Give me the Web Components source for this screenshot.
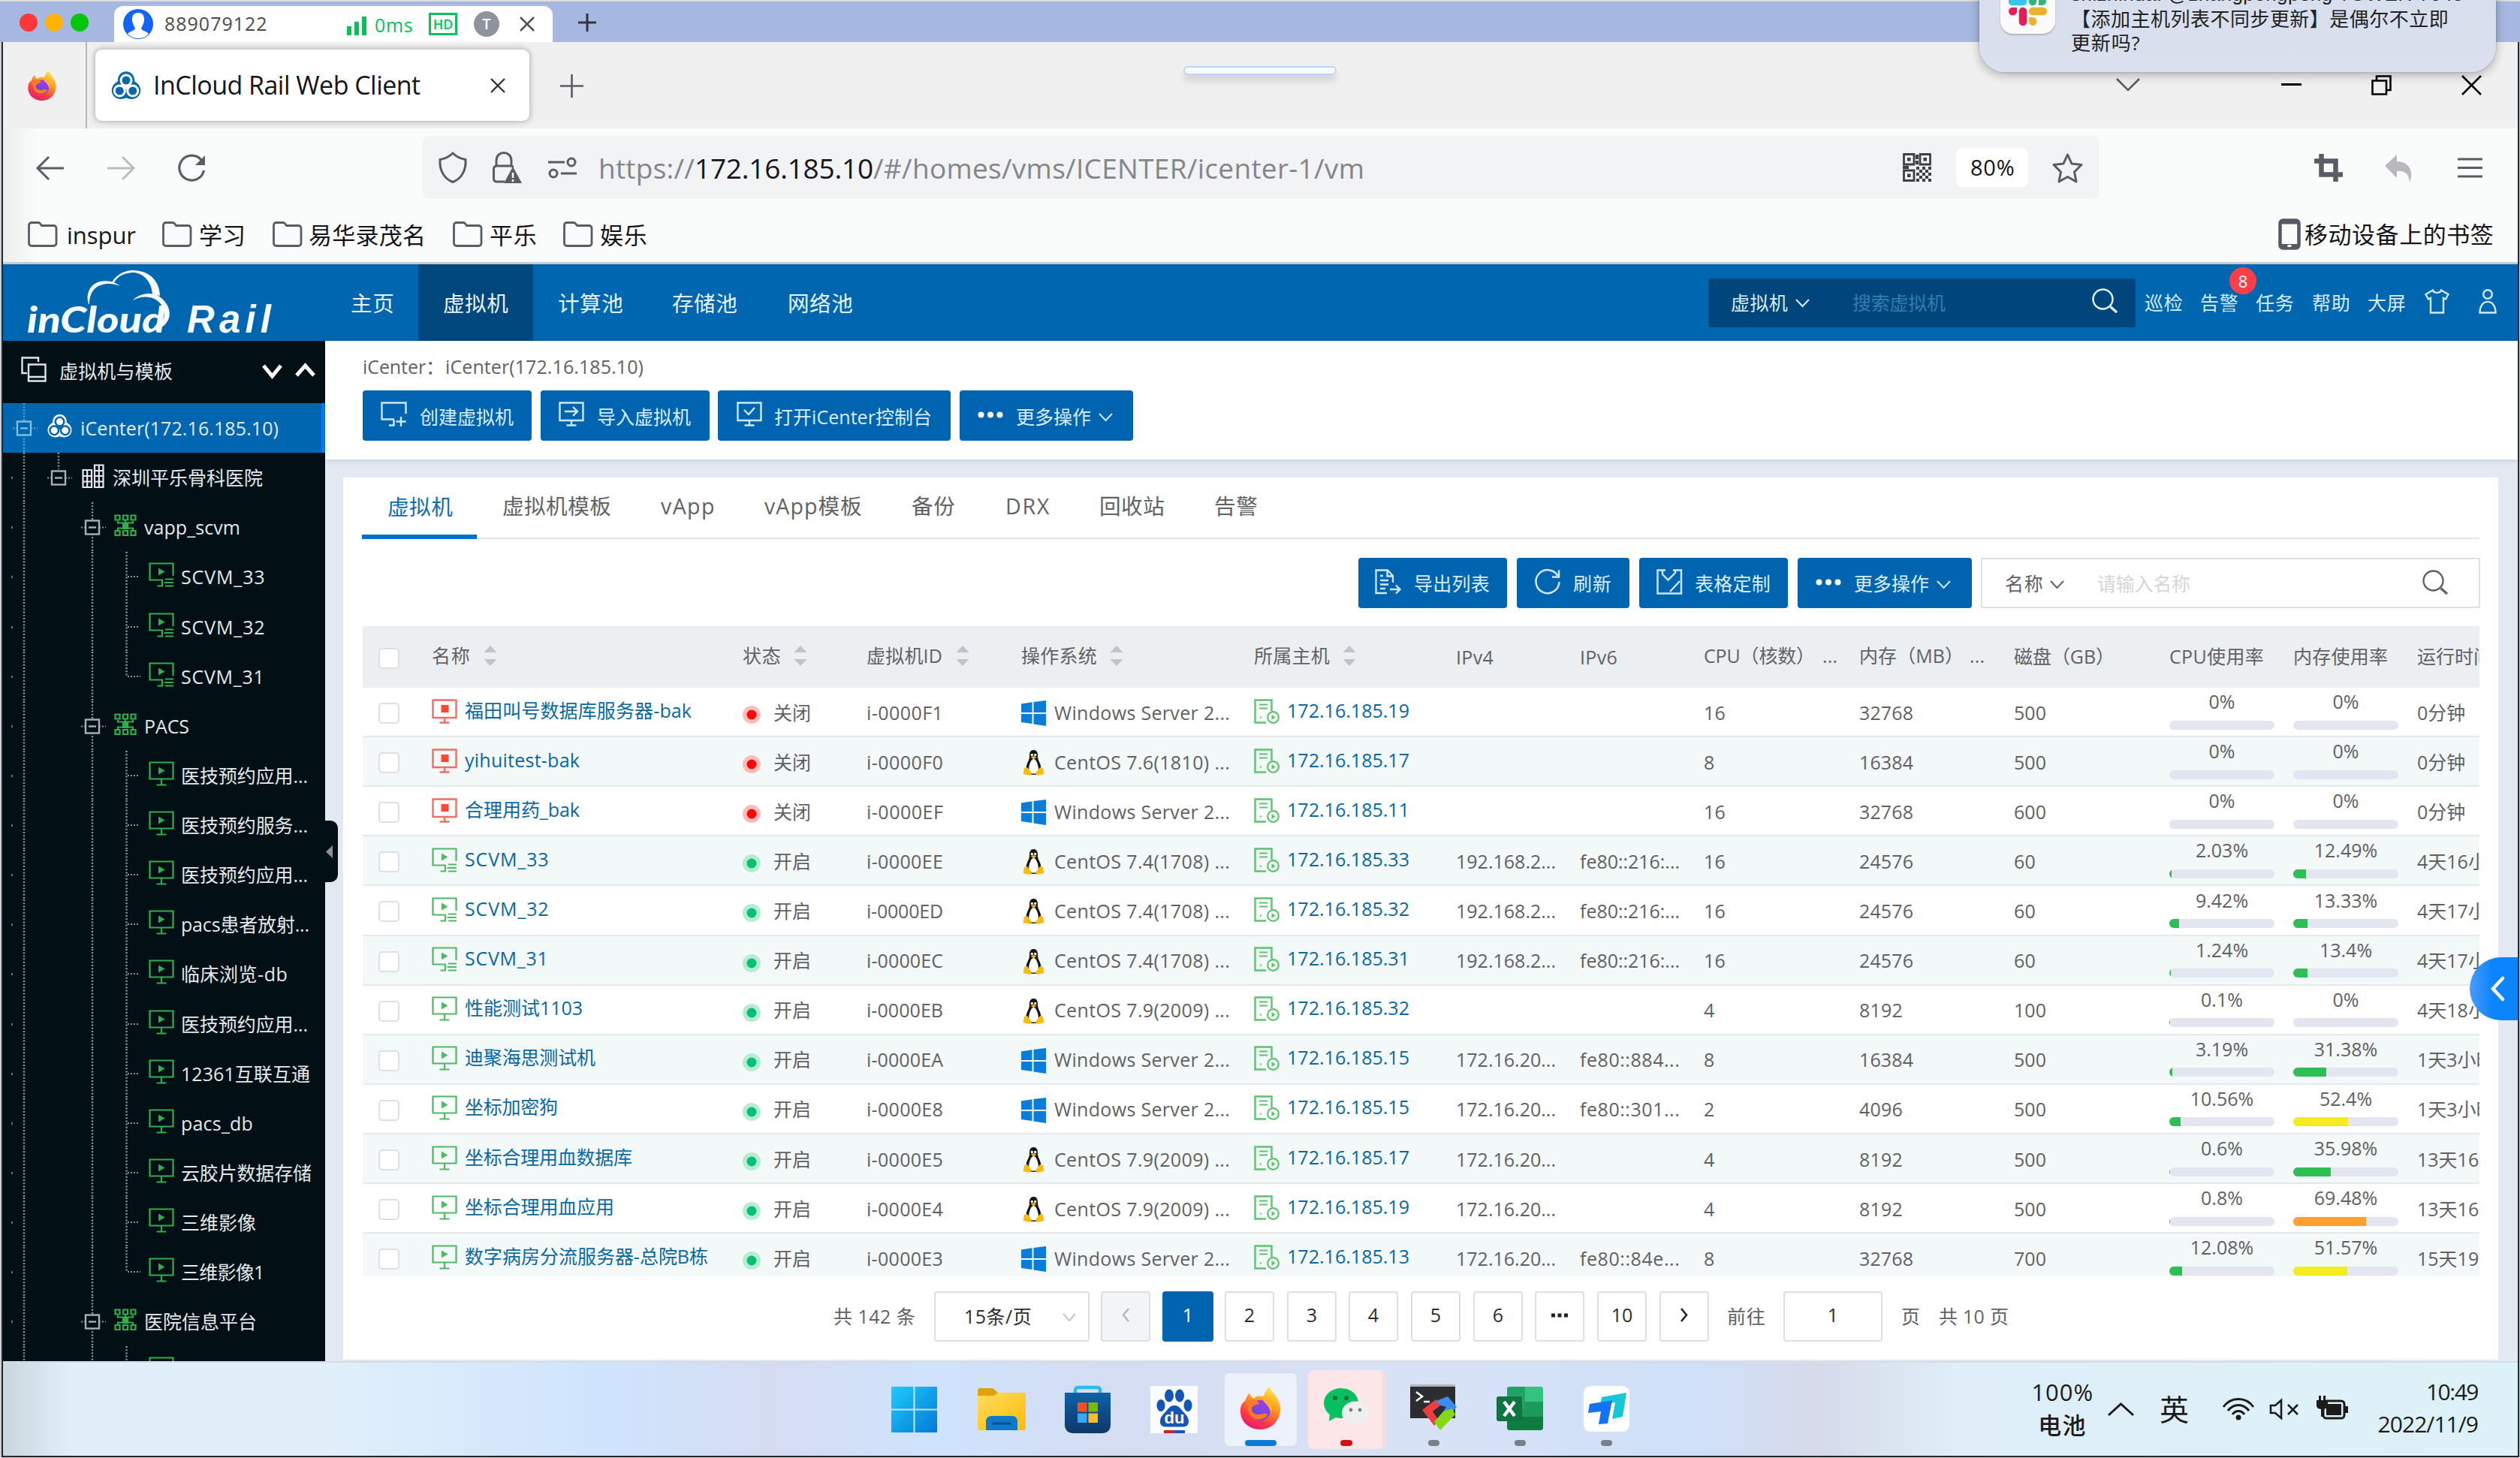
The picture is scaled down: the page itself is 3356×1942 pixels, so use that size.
<!DOCTYPE html>
<html lang="zh-CN">
<head>
<meta charset="utf-8">
<title>InCloud Rail Web Client</title>
<style>
html,body{margin:0;padding:0}
body{width:3356px;height:1942px;overflow:hidden;background:#cfd3d8;font-family:"Open Sans","Noto Sans CJK SC",sans-serif;font-size:25px;line-height:1;color:#606266}
</style>
</head>
<body>
<remote-desktop></remote-desktop>
<script>
/* ---------- helpers: every bar is a flex row, items carry their start and width ---------- */
const COMMON = `*{box-sizing:border-box}:host{display:block}
.row{display:flex;align-items:center;height:100%}
.i{flex:none;display:flex;align-items:center}
.c{justify-content:center}.r{justify-content:flex-end}
svg{display:block;flex:none;overflow:visible}`;
const item = (x, w, html, dy = 0, cls = '', st = '') => ({x, w, html, dy, cls, st});
const row = (x0, items) => {
  let p = x0;
  return '<div class="row">' + items.map(o => {
    const ml = o.x - p; p = o.x + o.w;
    return `<div class="i ${o.cls}" style="width:${o.w}px;margin:${o.dy > 0 ? 2 * o.dy : 0}px 0 ${o.dy < 0 ? -2 * o.dy : 0}px ${ml}px;${o.st}">${o.html}</div>`;
  }).join('') + '</div>';
};
const t = (x, w, text, o = {}) => item(x, w, `<fit-text w="${w}" style="font-size:${o.s || 25}px;${o.c ? 'color:' + o.c + ';' : ''}${o.b ? 'font-weight:' + o.b + ';' : ''}">${text}</fit-text>`, o.dy || 0);
const svg = (w, h, body, vb) => `<svg width="${w}" height="${h}" viewBox="${vb || `0 0 ${w} ${h}`}" fill="none">${body}</svg>`;
const ic = (x, w, h, body, dy = 0, vb) => item(x, w, svg(w, h, body, vb), dy);
const chev = (w, h, c, sw = 2) => `<path d="M1 1L${w / 2} ${h - 1}L${w - 1} 1" stroke="${c}" stroke-width="${sw}"/>`;
const cross = (s, c, sw) => `<path d="M1 1L${s - 1} ${s - 1}M${s - 1} 1L1 ${s - 1}" stroke="${c}" stroke-width="${sw}"/>`;
const plus = (s, c, sw) => `<path d="M${s / 2} 0V${s}M0 ${s / 2}H${s}" stroke="${c}" stroke-width="${sw}"/>`;
const glass = (c) => `<circle cx="14.5" cy="14.5" r="13" stroke="${c}" stroke-width="2.4"/><path d="M24.5 24.5L33 32" stroke="${c}" stroke-width="3.4"/>`;

const G = '#2fae4e';
const I = {
  vm: c => `<path d="M1.5 1.5H32.5V23.5H1.5Z M17 23.5V31M10.5 31.5H23.5" stroke="${c}" stroke-width="2.2"/><path d="M13 7.5L21.5 12.5L13 17.5Z" fill="${c}"/>`,
  scvm: c => `<path d="M32.5 18V1.5H1.5V23.5H18V31.5H11.5" stroke="${c}" stroke-width="2.2"/><path d="M13 7.5L21.5 12.5L13 17.5Z" fill="${c}"/><path d="M22 22.5H33M20.5 27H33M22 31.5H33" stroke="${c}" stroke-width="2.2"/>`,
  off: `<path d="M1.5 1.5H32.5V25H1.5Z M17 25V31M10.5 31.5H23.5" stroke="#ee6f62" stroke-width="2.4"/><rect x="12.5" y="8" width="10" height="10" fill="#fa4a35"/>`,
  vapp: `<path d="M5 9V11.5H25V9M15 8V20M5 21V18.5H25V21" stroke="${G}" stroke-width="2"/><rect x="11" y="11" width="8" height="9" fill="${G}"/><path d="M1.500 1.500H7.500V7.500H1.500ZM12 1.500H18V7.500H12ZM22.500 1.500H28.500V7.500H22.500ZM1.500 22H7.500V28H1.500ZM12 22H18V28H12ZM22.500 22H28.500V28H22.500Z" stroke="${G}" stroke-width="2.2"/>`,
  trefoil: (c, bg) => `<path d="M18 1C24 1 28 6 27.500 12C33 15 35.500 20 34 25.500C32 32 24 34 18 31C12 34 4 32 2 25.500C.5 20 3 15 8.500 12C8 6 12 1 18 1Z" fill="${c}"/><g stroke="${bg}" stroke-width="2.600"><circle cx="18" cy="11" r="6"/><circle cx="10.500" cy="23" r="6"/><circle cx="25.500" cy="23" r="6"/></g><circle cx="18" cy="18.500" r="2.500" fill="${bg}"/>`,
  building: `<path d="M1.500 8H13V31H1.500ZM17 1.500H28.500V31H17ZM1.500 16H13M1.500 23.500H13M7.200 8V31M17 9H28.500M17 16H28.500M17 23.500H28.500M22.800 1.500V31" stroke="#e6eaec" stroke-width="2.2"/>`,
  host: `<path d="M23.500 16V1.500H1.500V31.500H16" stroke="#5cc36d" stroke-width="2.400"/><path d="M7 7.500H18M7 12.500H18M8 24.500H10" stroke="#5cc36d" stroke-width="2.200"/><circle cx="25.500" cy="24.500" r="7.300" stroke="#5cc36d" stroke-width="2.200"/><path d="M23.500 21L28.500 24.500L23.500 28Z" fill="#5cc36d"/>`,
  win: `<path d="M0 4.500L14.500 2.300V16H0ZM16.500 2L33 0V16H16.500ZM0 18H14.500V31L0 29ZM16.500 18H33V34L16.500 31.500Z" fill="#0a7ddb"/>`,
  tux: `<path d="M16.500 0C21 0 22.300 4 22 9C22 14 26.500 18 26.500 25C26.500 30 24 33 16.500 33C9 33 6.500 30 6.500 25C6.500 18 11 14 11 9C10.700 4 12 0 16.500 0Z" fill="#141414"/><path d="M16.500 12C20 12 22.800 20 22.800 25C22.800 30 21 31.500 16.500 31.500C12 31.500 10.200 30 10.200 25C10.200 20 13 12 16.500 12Z" fill="#fff"/><circle cx="14.300" cy="6.500" r="1.700" fill="#fff"/><circle cx="18.700" cy="6.500" r="1.700" fill="#fff"/><path d="M12.500 9.500L16.500 8L20.500 9.500L16.500 12.500Z" fill="#f7b500"/><path d="M4 24L8 23L14 31L12 34L2.500 32ZM29 24L25 23L19 31L21 34L30.500 32Z" fill="#f9bd09"/>`,
  folder: `<path d="M1.500 5C1.500 3 3 1.500 5 1.500H14C16 1.500 17 3 18.500 5.500H34.500C36.500 5.500 38 7 38 9V29C38 31 36.500 32.500 34.500 32.500H5C3 32.500 1.500 31 1.500 29Z" stroke="#5b5b66" stroke-width="2.800"/>`,
  firefox: `<defs><linearGradient id="ffa" x1=".8" y1="0" x2=".3" y2="1"><stop offset="0" stop-color="#fff04a"/><stop offset=".4" stop-color="#ff9a1f"/><stop offset=".75" stop-color="#ff3a45"/><stop offset="1" stop-color="#e8176f"/></linearGradient><linearGradient id="ffb" x1=".7" y1="0" x2=".3" y2="1"><stop offset="0" stop-color="#a33ce8"/><stop offset="1" stop-color="#5a4be0"/></linearGradient></defs><path d="M6 13C7 9 9 7 10 6C10.500 9 12 10.500 14 11C17 8 20 9 23 9C24 5 27 2 28 0C31 5 36 9 38 16C41 28 33 40 20 40C8 40 0 31 1.500 20C2 17 3 15 6 13Z" fill="url(#ffa)"/><circle cx="20" cy="22" r="9.500" fill="url(#ffb)"/><path d="M8 13C13 11 17 12 19 16C17 17 13 17 12 20C11 23 14 26 18 26C22 26 24 24 27 26C23 33 12 32 9 24C7 20 7 16 8 13Z" fill="#ff7a22"/><path d="M23 9C28 12 32 18 30 25C29 21 27 17 23 14Z" fill="#ffb02b"/>`
};

class Base extends HTMLElement {
  connectedCallback() {
    if (this.shadowRoot) return;
    this.attachShadow({mode: 'open'}).innerHTML = `<style>${COMMON}${this.css()}</style>${this.html()}`;
  }
  css() { return ''; }
  html() { return '<slot></slot>'; }
}
const def = (n, c) => customElements.define(n, c);

/* text tracked out or in so that it fills its column */
def('fit-text', class extends HTMLElement {
  connectedCallback() {
    if (this.shadowRoot) return;
    this.attachShadow({mode: 'open'}).innerHTML = `<style>:host{display:inline-block;white-space:pre;line-height:1;flex:none}span{display:inline-block;white-space:pre}</style><span><slot></slot></span>`;
    const w = +this.getAttribute('w'), n = [...this.textContent].length, s = this.shadowRoot.querySelector('span');
    const nat = s.getBoundingClientRect().width;
    if (w && n > 1 && nat) s.style.letterSpacing = ((w - nat) / (n - 0.6)).toFixed(3) + 'px';
  }
});

/* ---------- remote viewer title bar ---------- */
def('viewer-bar', class extends Base {
  css() { return `:host{height:56px;background:#a6b8e1;border-top:2px solid #dcdcdc}
    .tab{display:block;width:100%;height:48px;margin-top:6px;background:#fff;border-radius:12px 12px 0 0}
    .row{align-items:center}`; }
  html() {
    const dot = (x, c) => ic(x, 24, 26, `<ellipse cx="12" cy="13" rx="12" ry="12" fill="${c}"/>`, 1);
    return row(0, [dot(26, '#fd3838'), dot(60, '#ffb300'), dot(94, '#04c60d'),
      item(152, 584, `<div class="tab">${row(152, [
        ic(164, 40, 40, `<circle cx="20" cy="20" r="20" fill="#1463f3"/><path d="M20 5C26 5 28.500 9 28 15C27.500 20 25 23 24 26C25 29 32 30 34 33C30 37.500 25 39 20 39C15 39 10 37.500 6 33C8 30 15 29 16 26C15 23 12.500 20 12 15C11.500 9 14 5 20 5Z" fill="#fff"/>`),
        t(219, 137, '889079122', {s: 25, c: '#4a4a4a', dy: -1}),
        ic(462, 27, 25, `<path d="M3 25V13M13 25V7M23 25V0" stroke="#0bbf59" stroke-width="6"/>`, 2),
        t(499, 51, '0ms', {s: 25, c: '#0bbf59', dy: 1}),
        item(571, 38, `<svg width="38" height="30" viewBox="0 0 38 30"><rect x="1.500" y="1.500" width="35" height="27" fill="none" stroke="#0bbf59" stroke-width="3"/><text x="19" y="21.500" text-anchor="middle" font-size="18" font-weight="600" fill="#0bbf59" font-family="Open Sans">HD</text></svg>`),
        item(631, 34, `<svg width="34" height="34"><circle cx="17" cy="17" r="17" fill="#8d929b"/><text x="17" y="24" text-anchor="middle" font-size="20" font-weight="600" fill="#fff" font-family="Open Sans">T</text></svg>`),
        ic(692, 20, 20, cross(20, '#555', 2.6))])}</div>`, 0, '', 'align-self:flex-end'),
      ic(770, 24, 24, plus(24, '#333', 3), 1)]);
  }
});

/* ---------- browser tab strip ---------- */
def('tab-strip', class extends Base {
  css() { return `:host{height:115px;background:#f0f0f0}
    .pin{border-right:2px solid #b9b9b9;height:115px}
    .tab{width:100%;height:95px;background:#fff;border-radius:9px;box-shadow:0 0 8px rgba(0,0,0,.35)}`; }
  html() {
    return row(4, [
      item(4, 112, row(4, [ic(36, 40, 40, I.firefox, 0)]), 0, 'pin'),
      item(127, 578, `<div class="tab">${row(127, [
        ic(147, 42, 40, I.trefoil('#0b67ac', '#fff'), 0, '0 0 36 34'),
        t(204, 356, 'InCloud Rail Web Client', {s: 34, c: '#15141a', dy: -1}),
        ic(653, 20, 20, cross(20, '#333', 2.4))])}</div>`),
      ic(746, 31, 31, plus(31, '#5b5b66', 2.6), 1),
      ic(2818, 32, 17, chev(32, 17, '#5b5b66', 2.600), -1),
      ic(3038, 27, 3, `<rect width="27" height="3" fill="#000"/>`, -1),
      ic(3158, 27, 27, `<path d="M1.500 7.500H20V25.500H1.500ZM7 7V1.500H25.500V20H20" stroke="#000" stroke-width="2.600"/>`, 0),
      ic(3278, 27, 27, cross(27, '#000', 2.6), 0)]);
  }
});

/* ---------- address bar and bookmarks ---------- */
def('browser-toolbar', class extends Base {
  css() { return `:host{height:181px;background:linear-gradient(90deg,#eceeee 0,#fafcfb 45px);border-bottom:3px solid #c8ccce}
    .a{height:104px}.b{height:74px}.url{width:100%;height:84px;background:#f1f3f5;border-radius:8px}
    .zoom{width:96px;height:52px;background:#fff;border-radius:8px}`; }
  html() {
    const g = '#5b5b66';
    const bm = (x, tx, w, s) => [ic(x, 40, 34, I.folder), t(tx, w, s, {s: 31, c: '#15141a', dy: 1})];
    let qr = `<g stroke="#3f3f46" stroke-width="2.800"><path d="M1.500 1.500H15V15H1.500ZM23 1.500H36.500V15H23ZM1.500 23H15V36.500H1.500Z"/></g><path d="M6 6H10.500V10.500H6ZM27.500 6H32V10.500H27.500ZM6 27.500H10.500V32H6Z" fill="#3f3f46"/>`;
    for (let y = 0; y < 5; y++) for (let x = 0; x < 5; x++) if ((x + y) % 2 == 0) qr += `<rect x="${18 + x * 4}" y="${18 + y * 4}" width="4" height="4" fill="#3f3f46"/>`;
    qr += '<path d="M0 17H8V21H0ZM17 2H21V8H17ZM17 10H21V15H17Z" fill="#3f3f46"/>';
    return `<div class="a">${row(4, [
      ic(48, 38, 32, `<path d="M37 16H2M17 1L2 16L17 31" stroke="${g}" stroke-width="3"/>`, 1),
      ic(142, 38, 32, `<path d="M1 16H36M21 1L36 16L21 31" stroke="#bdbdc1" stroke-width="3"/>`, 1),
      ic(236, 38, 38, `<path d="M32 7A16.500 16.500 0 1 0 35.500 21" stroke="${g}" stroke-width="3.200"/><path d="M37 1V14H24Z" fill="${g}"/>`, 2),
      item(563, 2232, `<div class="url">${row(563, [
        ic(584, 38, 42, `<path d="M19 2C24 7 29 9.500 36 10.500C37 24 31 36 19 40.500C7 36 1 24 2 10.500C9 9.500 14 7 19 2Z" stroke="${g}" stroke-width="3"/>`),
        ic(655, 40, 42, `<path d="M6 19V12C6 -2 26 -2 26 12V19M17 40H7C4 40 2.500 38.500 2.500 36V23C2.500 20 4 19 7 19H25C27 19 28 20 28.500 21" stroke="${g}" stroke-width="3"/><path d="M28 20L40 42H16Z" fill="${g}"/><path d="M28 28V35M28 37V40" stroke="#fff" stroke-width="2.500"/>`),
        ic(730, 39, 28, `<path d="M0 7H22M17 22H38" stroke="${g}" stroke-width="3.200"/><circle cx="31" cy="7" r="5" stroke="${g}" stroke-width="3"/><circle cx="7" cy="22" r="5" stroke="${g}" stroke-width="3"/>`),
        t(797, 128, 'https://', {s: 37, c: '#85858c'}), t(925, 238, '172.16.185.10', {s: 37, c: '#15141a'}),
        t(1163, 654, '/#/homes/vms/ICENTER/icenter-1/vm', {s: 37, c: '#85858c'}),
        ic(2534, 38, 38, qr),
        item(2605, 96, `<div class="zoom">${row(2605, [t(2624, 59, '80%', {s: 29, c: '#15141a', dy: -1})])}</div>`),
        ic(2733, 41, 40, `<path d="M20.500 2L26 14L39 15.500L29.500 25L32 38L20.500 31.500L9 38L11.500 25L2 15.500L15 14Z" stroke="${g}" stroke-width="3" stroke-linejoin="round"/>`, 1)])}</div>`),
      ic(3082, 38, 37, `<path d="M9.500 0V27.500H38M0 9.500H28.500V37" stroke="${g}" stroke-width="6.500"/>`),
      ic(3176, 38, 37, `<path d="M16 0V9C30 9 40 20 33 37C32 25 26 21 16 22V31L0 15Z" fill="#b9b9bd"/>`, 1),
      ic(3273, 33, 27, `<path d="M0 2H33M0 13.500H33M0 25H33" stroke="${g}" stroke-width="3.200"/>`)])}</div>
    <div class="b">${row(4, [...bm(37, 89, 92, 'inspur'), ...bm(216, 265, 62, '学习'), ...bm(363, 411, 156, '易华录茂名'), ...bm(603, 652, 63, '平乐'), ...bm(750, 799, 63, '娱乐'),
      ic(3034, 30, 42, `<rect x="2.500" y="2.500" width="25" height="37" rx="4" stroke="#555962" stroke-width="4.500"/><path d="M3 34H27V38H3Z" fill="#555962"/><path d="M3 5H27" stroke="#555962" stroke-width="5"/><rect x="12.500" y="35" width="5" height="3" fill="#fff"/>`),
      t(3069, 252, '移动设备上的书签', {s: 31, c: '#15141a', dy: 0})])}</div>`;
  }
});

/* ---------- product navigation ---------- */
def('app-nav', class extends Base {
  css() { return `:host{height:102px;background:#0066b0}
    .on{background:#00477d;height:102px}.search{width:100%;height:65px;background:#00457b;border-radius:3px}
    .alert{position:relative}.badge{position:absolute;left:39px;top:-35px;width:36px;height:36px;border-radius:18px;background:#fb3f49;display:flex;align-items:center;justify-content:center;color:#fff;font-size:22px}`; }
  html() {
    const n = (x, w, s) => t(x, w, s, {s: 28.600, c: '#e9f4fb', dy: 1});
    const m = (x, w, s) => t(x, w, s, {c: '#d8edf8', dy: 0});
    const al = item(2930, 51, `<div class="alert"><fit-text w="51" style="color:#d8edf8">告警</fit-text><span class="badge">8</span></div>`, 0);
    return row(4, [
      item(20, 360, `<svg width="360" height="102"><text x="16" y="91" font-family="Lato" font-weight="900" font-style="italic" font-size="47" fill="#f4fafd" textLength="184" lengthAdjust="spacingAndGlyphs">inCloud</text><text x="229" y="91" font-family="Liberation Sans" font-weight="700" font-style="italic" font-size="51" fill="#f4fafd" textLength="112">Rail</text><g fill="#f4fafd"><path d="M98 53C92 34 106 20 124 22.500C131 23 136 26 140 29C134 26.500 128 26 123 26C108 27 99 36 99 53Z"/><path d="M129 24C136 12 148 8 157 8C178 8 193 22 193 42L183 40C182 24 172 12 158 11C146 11 137 16 132 24Z"/><path d="M157 48C166 38 186 34 198 48C210 61 209 78 190 87L180 90C196 82 203 70 196 56C189 43 172 40 157 48Z"/></g></svg>`),
      n(467, 58, '主页'),
      item(557, 153, row(557, [n(590, 87, '虚拟机')]), 0, 'on'),
      n(743, 87, '计算池'), n(895, 87, '存储池'), n(1049, 87, '网络池'),
      item(2275, 569, `<div class="search">${row(2275, [t(2305, 76, '虚拟机', {c: '#d8edf8', dy: 0}), ic(2391, 19, 11, chev(19, 11, '#d8edf8'), 0), t(2467, 124, '搜索虚拟机', {c: '#2c80ad', dy: 0}), ic(2786, 35, 34, glass('#e4f2fa'), -2)])}</div>`),
      m(2856, 51, '巡检'), al, m(3004, 51, '任务'), m(3079, 51, '帮助'), m(3153, 51, '大屏'),
      ic(3229, 33, 33, `<path d="M11 1.500C12 6 21 6 22 1.500L31.500 7L28 13.500L25 12V31.500H8V12L5 13.500L1.500 7Z" stroke="#cfeaf6" stroke-width="2.400"/>`, -2),
      ic(3301, 24, 33, `<circle cx="12" cy="7" r="5.800" stroke="#cfeaf6" stroke-width="2.400"/><path d="M1.500 31.500C1.500 12 22.500 12 22.500 31.500Z" stroke="#cfeaf6" stroke-width="2.400"/>`, -2)]);
  }
});

/* ---------- inventory tree ---------- */
const TREE = [[0, 'iCenter(172.16.185.10)', 264], [1, '深圳平乐骨科医院', 200], [2, 'vapp_scvm', 128], [3, 'SCVM_33', 112, 's'], [3, 'SCVM_32', 112, 's'], [3, 'SCVM_31', 111, 's', 'last'],
  [2, 'PACS', 60], [3, '医技预约应用...', 169], [3, '医技预约服务...', 169], [3, '医技预约应用...', 169], [3, 'pacs患者放射...', 171], [3, '临床浏览-db', 142], [3, '医技预约应用...', 169], [3, '12361互联互通', 172], [3, 'pacs_db', 96], [3, '云胶片数据存储', 174], [3, '三维影像', 100], [3, '三维影像1', 111, '', 'last'], [2, '医院信息平台', 150], [3, '', 0]];
def('tree-row', class extends Base {
  css() { return `:host{height:66.140px;color:#e4e9eb}:host([on]){background:linear-gradient(90deg,#0066b0 424px,#0b76f5 424px)}`; }
  html() {
    const i = +this.getAttribute('n'), [lv, s, w, k, last] = TREE[i], c = i ? '#8b9396' : '#3fb0cf';
    const v = (x, a, b) => `<path d="M${x} ${a}V${b}" stroke="${c}" stroke-width="2.500" stroke-dasharray="2 2.200"/>`;
    let g = v(28, 0, 66.5) + (i ? '<path d="M12 32V35" stroke="#8b9396" stroke-width="1.500"/>' : '');
    if (lv == 1) g += v(74, 0, 22);
    if (i > 1) g += v(119, 0, 66.5);
    if (lv == 3 && s) g += v(164.500, 0, last ? 33 : 66.5) + `<path d="M166 33H${last ? 183 : 180}" stroke="${c}" stroke-width="2" stroke-dasharray="2 2"/>`;
    if (lv == 3 && !s) g += v(164.500, 0, 66.5);
    if (lv < 3) { const x = [28, 74, 119][lv], bg = i ? '#020f14' : '#0066b0', bc = i ? '#a8b0b3' : '#7fbfe0';
      g += `<path d="M${x - 15} 33.500H${x + 18}" stroke="${c}" stroke-width="2" stroke-dasharray="2 2"/><rect x="${x - 9}" y="24.500" width="18" height="18" fill="${bg}" stroke="${bc}" stroke-width="2.400"/><path d="M${x - 5} 33.500H${x + 5}" stroke="${bc}" stroke-width="2.400"/>`; }
    const gut = item(4, [54, 101, 146, 190][lv], svg([54, 101, 146, 190][lv], 66, g), 0, '', 'height:66px');
    const icon = lv == 0 ? ic(62, 35, 33, I.trefoil('#fff', '#0066b0'), -3, '0 0 36 34') : lv == 1 ? ic(109, 30, 33, I.building, -2) : lv == 2 ? ic(152, 30, 30, I.vapp, -2) : ic(198, 34, 34, (k ? I.scvm : I.vm)(G), -2);
    return row(4, [gut, icon, ...(s ? [t([107, 150, 192, 241][lv], w, s, {dy: i ? .5 : 0})] : [])]);
  }
});
def('tree-panel', class extends Base {
  css() { return `:host{width:429px;height:1359px;background:#020f14;position:relative;color:#e4e9eb;flex:none}
    .head{height:83px}.tree{height:1276px;overflow:hidden}
    .grip{position:absolute;left:429px;top:639px;width:17px;height:82px;background:#020f14;border-radius:0 10px 10px 0;display:flex;align-items:center}`; }
  html() {
    return `<div class="head">${row(4, [
      ic(28, 34, 34, `<path d="M8 22H1.500V1.500H23V7M10 10.500H32.500V32.500H10ZM10 27H32.500" stroke="#dfe4e6" stroke-width="2.400"/>`, -4),
      t(79, 151, '虚拟机与模板', {dy: -1}),
      ic(350, 25, 16, chev(25, 16, '#fff', 5), -2), ic(394, 25, 16, `<path d="M1 15L12.500 2L24 15" stroke="#fff" stroke-width="5"/>`, -3)])}</div>
      <div class="tree">${TREE.map((r, i) => `<tree-row n="${i}" ${i ? '' : 'on'}></tree-row>`).join('')}</div>
      <div class="grip">${svg(12, 17, '<path d="M10 0V17L1 8.500Z" fill="#8d9194"/>')}</div>`;
  }
});

/* ---------- main header with actions ---------- */
const BTN = `.btn{background:#0064b1;height:67px;border-radius:4px;color:#d9eefa}`;
const W = '#cfe8f6';
const btn = (x, w, items) => item(x, w, row(x, items), 0, 'btn');
const dots = x => ic(x, 34, 9, `<circle cx="4.500" cy="4.500" r="4" fill="#fff"/><circle cx="17" cy="4.500" r="4" fill="#fff"/><circle cx="29.500" cy="4.500" r="4" fill="#fff"/>`, -1);
def('center-head', class extends Base {
  css() { return `:host{height:158px;background:#fff;box-shadow:0 2px 8px rgba(0,0,0,.10)}${BTN}.a{height:66px}.b{height:67px}`; }
  html() {
    return `<div class="a">${row(433, [t(483, 109, 'iCenter：', {dy: 1}), t(593, 264, 'iCenter(172.16.185.10)', {dy: 1})])}</div>
    <div class="b">${row(433, [
      btn(483, 225, [ic(507, 35, 33, `<path d="M18 23.500H1.500V1.500H33.500V16M17.500 24V31.500H11M27 20V33M20.500 26.500H33.500" stroke="${W}" stroke-width="2.400"/>`, -2), t(559, 125, '创建虚拟机', {dy: 2})]),
      btn(720, 225, [ic(744, 34, 33, `<path d="M1.500 1.500H32.500V25H1.500ZM17 25V31M10.500 31.500H23.500M8 13H25M19 7L25 13L19 19" stroke="${W}" stroke-width="2.400"/>`, -2), t(795, 125, '导入虚拟机', {dy: 2})]),
      btn(956, 310, [ic(981, 34, 33, `<path d="M1.500 1.500H32.500V25H1.500ZM17 25V31M10.500 31.500H23.500M10 11L16 17L24 8" stroke="${W}" stroke-width="2.400"/>`, -2), t(1031, 210, '打开iCenter控制台', {dy: 2})]),
      btn(1278, 231, [dots(1302), t(1353, 100, '更多操作', {dy: 2}), ic(1463, 19, 11, chev(19, 11, W), 2)])])}</div>`;
  }
});

/* ---------- table ---------- */
def('usage-meter', class extends Base {
  css() { return `:host{width:140px;height:66px;overflow:hidden}
    .p{height:26px;margin-top:6px;display:flex;justify-content:center;align-items:center}
    .bar{height:12px;margin-top:12px;border-radius:6px;background:#e3e6f1;overflow:hidden}.bar div{height:12px}`; }
  html() {
    const v = parseFloat(this.getAttribute('v'));
    const c = v > 60 ? '#ff9f30' : v > 50 ? '#f4ec20' : '#2dbe54';
    return `<div class="p">${v}%</div><div class="bar"><div style="width:${v < 1 ? v ? 1 : 0 : v}%;background:${c}"></div></div>`;
  }
});
const L = 'Windows Server 2...';
const ROWS = [
  ['福田叫号数据库服务器-bak', 302, 'o', 'F1', L, 19, '', '', 16, 32768, 500, 0, 0, '0分钟'],
  ['yihuitest-bak', 153, 'o', 'F0', 'CentOS 7.6(1810) ...', 17, '', '', 8, 16384, 500, 0, 0, '0分钟'],
  ['合理用药_bak', 153, 'o', 'EF', L, 11, '', '', 16, 32768, 600, 0, 0, '0分钟'],
  ['SCVM_33', 112, 's', 'EE', 'CentOS 7.4(1708) ...', 33, '192.168.2...', 'fe80::216:...', 16, 24576, 60, 2.03, 12.49, '4天16小'],
  ['SCVM_32', 112, 's', 'ED', 'CentOS 7.4(1708) ...', 32, '192.168.2...', 'fe80::216:...', 16, 24576, 60, 9.42, 13.33, '4天17小'],
  ['SCVM_31', 111, 's', 'EC', 'CentOS 7.4(1708) ...', 31, '192.168.2...', 'fe80::216:...', 16, 24576, 60, 1.24, 13.4, '4天17小'],
  ['性能测试1103', 157, 'v', 'EB', 'CentOS 7.9(2009) ...', 32, '', '', 4, 8192, 100, 0.1, 0, '4天18小'],
  ['迪聚海思测试机', 174, 'v', 'EA', L, 15, '172.16.20...', 'fe80::884...', 8, 16384, 500, 3.19, 31.38, '1天3小时'],
  ['坐标加密狗', 124, 'v', 'E8', L, 15, '172.16.20...', 'fe80::301...', 2, 4096, 500, 10.56, 52.4, '1天3小时'],
  ['坐标合理用血数据库', 223, 'v', 'E5', 'CentOS 7.9(2009) ...', 17, '172.16.20...', '', 4, 8192, 500, 0.6, 35.98, '13天16'],
  ['坐标合理用血应用', 199, 'v', 'E4', 'CentOS 7.9(2009) ...', 19, '172.16.20...', '', 4, 8192, 500, 0.8, 69.48, '13天16'],
  ['数字病房分流服务器-总院B栋', 324, 'v', 'E3', L, 13, '172.16.20...', 'fe80::84e...', 8, 32768, 700, 12.08, 51.57, '15天19']];
const CB = item(504, 28, '<div class="cb"></div>', 2);
const CBS = `.cb{width:28px;height:28px;border:2px solid #dcdfe4;border-radius:5px;background:#fff}`;
def('vm-row', class extends Base {
  css() { return `:host{height:66.120px;border-bottom:2px solid #e6e9ec;overflow:hidden;color:#5f6165;white-space:nowrap}:host([alt]){background:#f3f8f9}${CBS}
    .cut{overflow:hidden}`; }
  html() {
    const [nm, w, k, id, os, h, v4, v6, cpu, mem, dk, uc, um, run] = ROWS[+this.getAttribute('n')];
    const on = k != 'o', B = '#0868a6', p = (x, s, w = 133) => s ? [t(x, w, s, {dy: 1})] : [];
    const num = (x, s) => t(x, Math.round(String(s).length * 14.400), String(s), {dy: 1});
    return row(483, [CB,
      ic(575, 34, 33, on ? (k == 's' ? I.scvm : I.vm)('#4cb963') : I.off, -1),
      t(619, w, nm, {c: B, dy: -2}),
      ic(989, 24, 24, `<circle cx="12" cy="12" r="12" fill="${on ? '#b5ecd2' : '#ffbcbc'}"/><circle cx="12" cy="12" r="6.500" fill="${on ? '#08bf76' : '#fb0505'}"/>`, 4),
      t(1030, 50, on ? '开启' : '关闭', {dy: 1}),
      t(1154, 102, 'i-0000' + id, {dy: 1}),
      ic(1360, 33, 34, os == L ? I.win : I.tux, 2), t(1404, 234, os, {dy: 1}),
      ic(1670, 34, 33, I.host, -1), t(1714, 163, '172.16.185.' + h, {c: B, dy: -2}),
      ...p(1939, v4), ...p(2104, v6), num(2269, cpu), num(2476, mem), num(2682, dk),
      item(2889, 140, `<usage-meter v="${uc}"></usage-meter>`, .5), item(3054, 140, `<usage-meter v="${um}"></usage-meter>`, .5),
      item(3219, 84, run, 1, 'cut')]);
  }
});
def('vm-table-head', class extends Base {
  css() { return `:host{height:82px;background:#ebeff2;white-space:nowrap;overflow:hidden}${CBS}.cut{overflow:hidden}`; }
  html() {
    const so = x => ic(x, 18, 27, '<path d="M9 0L17.500 9H.5ZM9 27L17.500 18H.5Z" fill="#bfc4cb"/>', -2);
    return row(483, [CB, t(575, 51, '名称', {dy: -2}), so(644), t(989, 51, '状态', {dy: -2}), so(1057), t(1154, 101, '虚拟机ID', {dy: -2}), so(1273), t(1360, 101, '操作系统', {dy: -2}), so(1478), t(1670, 101, '所属主机', {dy: -2}), so(1788),
      t(1939, 50, 'IPv4', {dy: 0}), t(2104, 50, 'IPv6', {dy: 0}), t(2269, 148, 'CPU（核数）', {dy: -2}), t(2427, 20, '...', {dy: -2}), t(2476, 139, '内存（MB）', {dy: -2}), t(2623, 20, '...', {dy: -2}), t(2682, 134, '磁盘（GB）', {dy: -1}),
      t(2889, 126, 'CPU使用率', {dy: -1}), t(3054, 126, '内存使用率', {dy: -1}), item(3219, 84, '运行时间', -1, 'cut')]);
  }
});
def('page-bar', class extends Base {
  css() { return `:host{height:67px;margin-top:19.500px}.bx{height:67px;border:2px solid #dcdfe4;border-radius:4px;color:#2c2e31}.c{padding-bottom:3px}.off{background:#f3f4f5}.on{background:#0064b1;color:#fff;border-color:#0064b1}`; }
  html() {
    const b = (x, s, k = '', w = 66) => item(x, w, s, 0, 'bx c ' + k);
    const ar = (c, d) => svg(10, 19, `<path d="${d}" stroke="${c}" stroke-width="2.600"/>`);
    return row(457, [t(1110, 109, '共 142 条', {dy: 0}),
      item(1244, 207, row(1246, [t(1284, 90, '15条/页', {dy: 0}), ic(1415, 18, 11, chev(18, 11, '#c0c4cc', 2), 1)]), 0, 'bx'),
      b(1466, ar('#b5b9c0', 'M9 1L2 9.500L9 18'), 'off'), b(1548, '1', 'on', 68), b(1631, '2'), b(1714, '3'), b(1796, '4'), b(1879, '5'), b(1962, '6'), b(2044, svg(24, 6, '<path d="M1 3H6M9.500 3H14.500M18 3H23" stroke="#222" stroke-width="5"/>')), b(2127, '10'), b(2210, ar('#222', 'M1 1L8 9.500L1 18')),
      t(2300, 51, '前往', {dy: 0}), b(2375, '1', '', 132), t(2532, 26, '页', {dy: 0}), t(2582, 93, '共 10 页', {dy: 0})]);
  }
});
def('vm-panel', class extends Base {
  css() { return `:host{margin:24px 26px 0 24px;height:1175px;background:#fff;width:2870px}${BTN}
    .tabs{height:82px;margin:0 25px;border-bottom:2px solid #e1e4e9}.tabs .on{height:82px;border-bottom:6px solid #006fd0;margin-bottom:-2px!important;align-self:flex-start}
    .bar{height:67px;margin:24.500px 0}.in{height:67px;border:2px solid #dfe1e5}
    .tbl{margin:0 25px 0 26px;height:866px;overflow:hidden}`; }
  html() {
    const tb = (x, w, s) => t(x, w, s, {s: 28.600, dy: -2});
    return `<div class="tabs">${row(482, [
        item(482, 153, row(482, [t(516, 87, '虚拟机', {s: 28.600, c: '#0d6cb5', dy: 1})]), 0, 'on'),
        tb(669, 145, '虚拟机模板'), tb(880, 72, 'vApp'), tb(1018, 130, 'vApp模板'), tb(1214, 58, '备份'), tb(1339, 59, 'DRX'), tb(1464, 87, '回收站'), tb(1617, 58, '告警')])}</div>
      <div class="bar">${row(457, [
        btn(1809, 198, [ic(1831, 35, 34, `<path d="M16 32H1.500V1.500H17L24 9V18M16.500 2V9.500H24M7 9H11M7 15H18M7 20.500H18M7 26H14M20 27H33M28 21.500L33.500 27L28 32.500" stroke="${W}" stroke-width="2.300"/>`, -1), t(1883, 101, '导出列表', {dy: 1})]),
        btn(2020, 150, [ic(2044, 34, 34, `<path d="M30.500 9A15.500 15.500 0 1 0 32.500 17" stroke="${W}" stroke-width="2.500"/><path d="M32 1.500V10.500H23" stroke="${W}" stroke-width="2.500"/>`, -1), t(2095, 51, '刷新', {dy: 1})]),
        btn(2183, 198, [ic(2206, 35, 34, `<path d="M12 1.500H1.500V32.500H33V1.500H22M8 1.500V7L15.500 14.500L25 5V1.500M18 30L31 16" stroke="${W}" stroke-width="2.400"/>`, -1), t(2257, 101, '表格定制', {dy: 1})]),
        btn(2394, 232, [dots(2418), t(2469, 100, '更多操作', {dy: 1}), ic(2579, 19, 11, chev(19, 11, W), 2)]),
        item(2638, 665, row(2640, [t(2670, 51, '名称', {dy: 1}), ic(2730, 19, 11, chev(19, 11, '#606266'), 2), t(2793, 124, '请输入名称', {c: '#d3d5d9', dy: 1}), ic(3226, 34, 33, glass('#606266'), -1)]), 0, 'in')])}</div>
      <div class="tbl"><vm-table-head></vm-table-head>${ROWS.map((r, i) => `<vm-row n="${i}" ${i % 2 ? 'alt' : ''}></vm-row>`).join('')}</div>
      <page-bar></page-bar>`;
  }
});

/* ---------- host taskbar ---------- */
def('task-bar', class extends Base {
  css() { return `:host{height:126px;background:linear-gradient(90deg,#c9d6dd 0,#e0effa 90px,#e0effa 430px,#cfe4fd 800px,#d5dcf2 1020px,#cfe3fd 1240px,#d5ddf2 1480px,#d8e2f6 1900px,#cfe0f8 2250px,#d6daea 2420px,#dfeef8 2600px,#ddf1f8 100%);color:#1b1b1b;border-top:2px solid #d3dbe4}
    .fx{height:101px;background:#edf1fc;border-radius:8px;border:2px solid #d5def0}.wx{height:105px;background:#fde6e8;border-radius:8px;border-right:5px solid #fbdadd}
    .col{display:flex;flex-direction:column;align-items:center;justify-content:flex-end;height:124px;padding-bottom:13px}
    .pill{height:8px;border-radius:4px;background:#7b7f8a}.two{flex-direction:column;gap:13px;align-items:flex-end}`; }
  html() {
    const app = (x, w, h, body, pc, pw, gap = 10, vb) => item(x, w, svg(w, h, body, vb) + `<div class="pill" style="width:${pw}px;background:${pc};margin-top:${gap}px"></div>`, 0, 'col');
    const dk = '#1b1b1b';
    return row(4, [
      ic(1187, 61, 61, `<defs><linearGradient id="w1" x1="0" y1="0" x2="1" y2="1"><stop offset="0" stop-color="#1fcbfd"/><stop offset="1" stop-color="#0378d6"/></linearGradient></defs><path d="M0 0H29.500V29.500H0ZM31.500 0H61V29.500H31.500ZM0 31.500H29.500V61H0ZM31.500 31.500H61V61H31.500Z" fill="url(#w1)"/>`, 0),
      ic(1302, 64, 56, `<defs><linearGradient id="f1" x1="0" y1="0" x2="1" y2="1"><stop offset="0" stop-color="#ffdb61"/><stop offset="1" stop-color="#fbbd07"/></linearGradient></defs><path d="M0 3C0 1 1 0 3 0H20L27 6H60C62 6 64 8 64 10V20H0Z" fill="#e3a00b"/><path d="M0 10H22L27 6H61C63 6 64 8 64 9V53C64 55 63 56 61 56H3C1 56 0 55 0 53Z" fill="url(#f1)"/><path d="M11 56V44C11 40 14 37 18 37H46C50 37 53 40 53 44V56Z" fill="#1079cb"/><path d="M21 47H43" stroke="#0a4f92" stroke-width="3" stroke-linecap="round"/>`, 0),
      ic(1418, 61, 63, `<defs><linearGradient id="s1" x1="0" y1="0" x2="0" y2="1"><stop offset="0" stop-color="#0f62a8"/><stop offset="1" stop-color="#0e3767"/></linearGradient></defs><path d="M14 14V6C14 3 16 2 18 2H43C45 2 47 3 47 6V14" stroke="#27bdf2" stroke-width="4.500"/><path d="M0 9H61V52C61 59 56 63 50 63H11C5 63 0 59 0 52Z" fill="url(#s1)"/><path d="M17 22H29.500V34.500H17Z" fill="#f25022"/><path d="M31.500 22H44V34.500H31.500Z" fill="#7fba00"/><path d="M17 36.500H29.500V49H17Z" fill="#39a9ee"/><path d="M31.500 36.500H44V49H31.500Z" fill="#ffb92a"/>`, 0),
      item(1532, 63, `<svg width="63" height="63"><rect width="63" height="63" fill="#fafcff"/><g fill="#1456b8"><ellipse cx="25" cy="13" rx="6" ry="8.500"/><ellipse cx="39" cy="13" rx="6" ry="8.500"/><ellipse cx="14" cy="26" rx="5.500" ry="8"/><ellipse cx="50" cy="26" rx="5.500" ry="8"/><path d="M32 26C39 26 41 32 46 37C52 42 54 54 44 54.500H20C10 54 12 42 18 37C23 32 25 26 32 26Z"/></g><text x="32" y="50" text-anchor="middle" font-family="Liberation Sans" font-weight="700" font-size="22" fill="#fff">du</text><rect x="18" y="59" width="14" height="4" fill="#d51f26"/><rect x="32" y="59" width="14" height="4" fill="#1456b8"/></svg>`, 0),
      item(1629, 100, row(1631, [app(1650, 57, 59, I.firefox, '#0b7bd6', 42, 13, '0 0 40 40')]), 0, 'fx'),
      item(1742, 104, row(1742, [app(1762, 62, 52, `<ellipse cx="24" cy="21" rx="23" ry="20" fill="#07c160"/><path d="M9 34L8 45L19 39Z" fill="#07c160"/><circle cx="16" cy="14" r="3" fill="#066b37"/><circle cx="31" cy="14" r="3" fill="#066b37"/><ellipse cx="43" cy="34" rx="18" ry="15.500" fill="#eef0f0"/><path d="M50 46L57 51L56 42Z" fill="#eef0f0"/><circle cx="37" cy="30" r="2.400" fill="#7d8285"/><circle cx="49" cy="30" r="2.400" fill="#7d8285"/>`, '#d60f15', 16, 18)]), 0, 'wx'),
      app(1878, 62, 61, `<rect width="60" height="45" fill="#2b2d30"/><path d="M0 1.500H60" stroke="#b4b6b8" stroke-width="3"/><path d="M8 10L16 16L8 22M18 23H26" stroke="#fff" stroke-width="2.600"/><path d="M16 34L34 20L40 28L30 36L38 48L32 55Z" fill="#ef3c3c"/><path d="M34 22L50 16L62 30L52 42L44 36L48 30L40 28Z" fill="#3b8cf0"/><path d="M32 50L44 36L56 32L60 40L40 61Z" fill="#86d816"/>`, '#7b7f8a', 15, 13),
      app(1993, 62, 58, `<rect x="14" width="48" height="58" rx="4" fill="#1c9a5b"/><path d="M14 4C14 1 16 0 18 0H38V29H14Z" fill="#21a366"/><path d="M38 0H58C61 0 62 2 62 4V20H38Z" fill="#33c481"/><path d="M14 40H62V54C62 57 60 58 58 58H18C16 58 14 57 14 54Z" fill="#107c41"/><rect y="13" width="34" height="33" rx="3" fill="#0e7440"/><path d="M10 20L24 39M24 20L10 39" stroke="#fff" stroke-width="4.500"/>`, '#7b7f8a', 15, 13),
      app(2109, 61, 61, `<rect width="61" height="61" rx="9" fill="#fff"/><path d="M24 15L57 9L52 41L38 44L42 22L22 25Z" fill="#18c7d6"/><path d="M8 24L38 19L32 50L20 51L23 34L6 36Z" fill="#1473f5"/>`, '#7b7f8a', 15, 11),
      item(2706, 82, '<fit-text w="82" style="font-size:31px;font-weight:500">100%</fit-text><fit-text w="64" style="font-size:31px;font-weight:500;margin-right:9px">电池</fit-text>', -1, 'two'),
      ic(2807, 35, 18, '<path d="M1 17L17.500 2L34 17" stroke="#1b1b1b" stroke-width="3"/>', 0),
      t(2876, 40, '英', {s: 39, dy: -1}),
      ic(2959, 44, 30, `<path d="M2 13C12 -1 32 -1 42 13M8 18C16 8 28 8 36 18M14 23C18 17 26 17 30 23" stroke="${dk}" stroke-width="3"/><circle cx="22" cy="27" r="3.500" fill="${dk}"/>`, -1),
      ic(3022, 40, 28, `<path d="M2 9H8L16 2V26L8 19H2Z" stroke="${dk}" stroke-width="2.600"/><path d="M25 8L38 21M38 8L25 21" stroke="${dk}" stroke-width="2.600"/>`, 0),
      ic(3085, 43, 32, `<rect x="9" y="7" width="28" height="23" rx="4" stroke="${dk}" stroke-width="3"/><rect x="13" y="11" width="20" height="15" fill="${dk}"/><path d="M38 14H42V23H38ZM0 6H15V13C15 17 11 18 7.500 18C4 18 0 17 0 13ZM3 0H6V7H3ZM9 0H12V7H9ZM6 16H9V28H6Z" fill="${dk}"/>`, -2),
      item(3166, 134, '<fit-text w="70" style="font-size:30px">10:49</fit-text><fit-text w="134" style="font-size:30px">2022/11/9</fit-text>', -2, 'two')]);
  }
});

/* ---------- overlays ---------- */
def('slack-toast', class extends Base {
  css() { return `:host{position:absolute;left:2636px;top:-70px;width:688px;height:166px;background:linear-gradient(#d6ddec,#dae0ee);border-radius:0 0 34px 34px;box-shadow:0 4px 14px rgba(0,0,0,.28),0 0 2px rgba(0,0,0,.3);color:#222;padding:42px 0 0 28px;overflow:visible}
    .w{display:flex;gap:21px}.t{display:flex;flex-direction:column;gap:6.500px;padding-top:7px}.ico{width:73px;height:73px;background:#fbfbfc;border-radius:17px;box-shadow:0 2px 2px rgba(0,0,0,.2);display:flex;align-items:center;justify-content:center}`; }
  html() {
    const s = `<g stroke-width="10.500" stroke-linecap="round"><path d="M6 20H20" stroke="#36c5f0"/><path d="M33 6V20" stroke="#2eb67d"/><path d="M47 33H33" stroke="#ecb22e"/><path d="M20 47V33" stroke="#e01e5a"/></g><path d="M20 2A5 5 0 0 1 25 7V12H20A5 5 0 0 1 20 2Z" fill="#36c5f0"/><path d="M51 20A5 5 0 0 1 46 25H41V20A5 5 0 0 1 51 20Z" fill="#2eb67d"/><path d="M33 52A5 5 0 0 1 28 47V41H33A5 5 0 0 1 33 52Z" fill="#ecb22e"/><path d="M1 33A5 5 0 0 1 6 28H12V33A5 5 0 0 1 1 33Z" fill="#e01e5a"/>`;
    return `<div class="w"><div class="ico">${svg(53, 53, s)}</div><div class="t"><fit-text w="523" style="font-family:'Liberation Sans';font-size:26px">shizhihua: @zhangpengpeng TOWER-7048</fit-text><fit-text w="503" style="font-size:26px">【添加主机列表不同步更新】是偶尔不立即</fit-text><fit-text w="92" style="font-size:26px">更新吗?</fit-text></div></div>`;
  }
});
def('float-handle', class extends Base {
  css() { return `:host{position:absolute;left:1576px;top:88px;width:204px;height:12px;background:#f8fafc;border:2px solid #bdd6f3;border-radius:6px;box-shadow:0 8px 10px rgba(0,0,0,.12);box-sizing:border-box}`; }
});
def('side-handle', class extends Base {
  css() { return `:host{position:absolute;right:0;top:821px;width:64px;height:84px;box-sizing:border-box;background:linear-gradient(90deg,#4a9bf8,#0a84ff 50%);border-radius:42px 0 0 42px;display:flex;align-items:center;padding-left:28px}`; }
  html() { return svg(18, 32, '<path d="M16 2L3 16L16 30" stroke="#fff" stroke-width="4.500" stroke-linecap="round"/>'); }
});
def('app-body', class extends Base {
  css() { return `:host{display:flex;height:1359px;background:#e3e8f1;position:relative}.m{flex:1;min-width:0}`; }
  html() { return `<tree-panel></tree-panel><div class="m"><center-head></center-head><vm-panel></vm-panel></div><side-handle></side-handle>`; }
});
def('remote-desktop', class extends Base {
  css() { return `:host{width:3356px;height:1942px;position:relative;overflow:hidden}
    .stage{margin:0 1px 0 2px;border:2px solid #25282a;border-top:0;height:1885px;overflow:hidden}`; }
  html() { return `<viewer-bar></viewer-bar><div class="stage"><tab-strip></tab-strip><browser-toolbar></browser-toolbar><app-nav></app-nav><app-body></app-body><task-bar></task-bar></div><float-handle></float-handle><slack-toast></slack-toast>`; }
});
</script>
</body>
</html>
